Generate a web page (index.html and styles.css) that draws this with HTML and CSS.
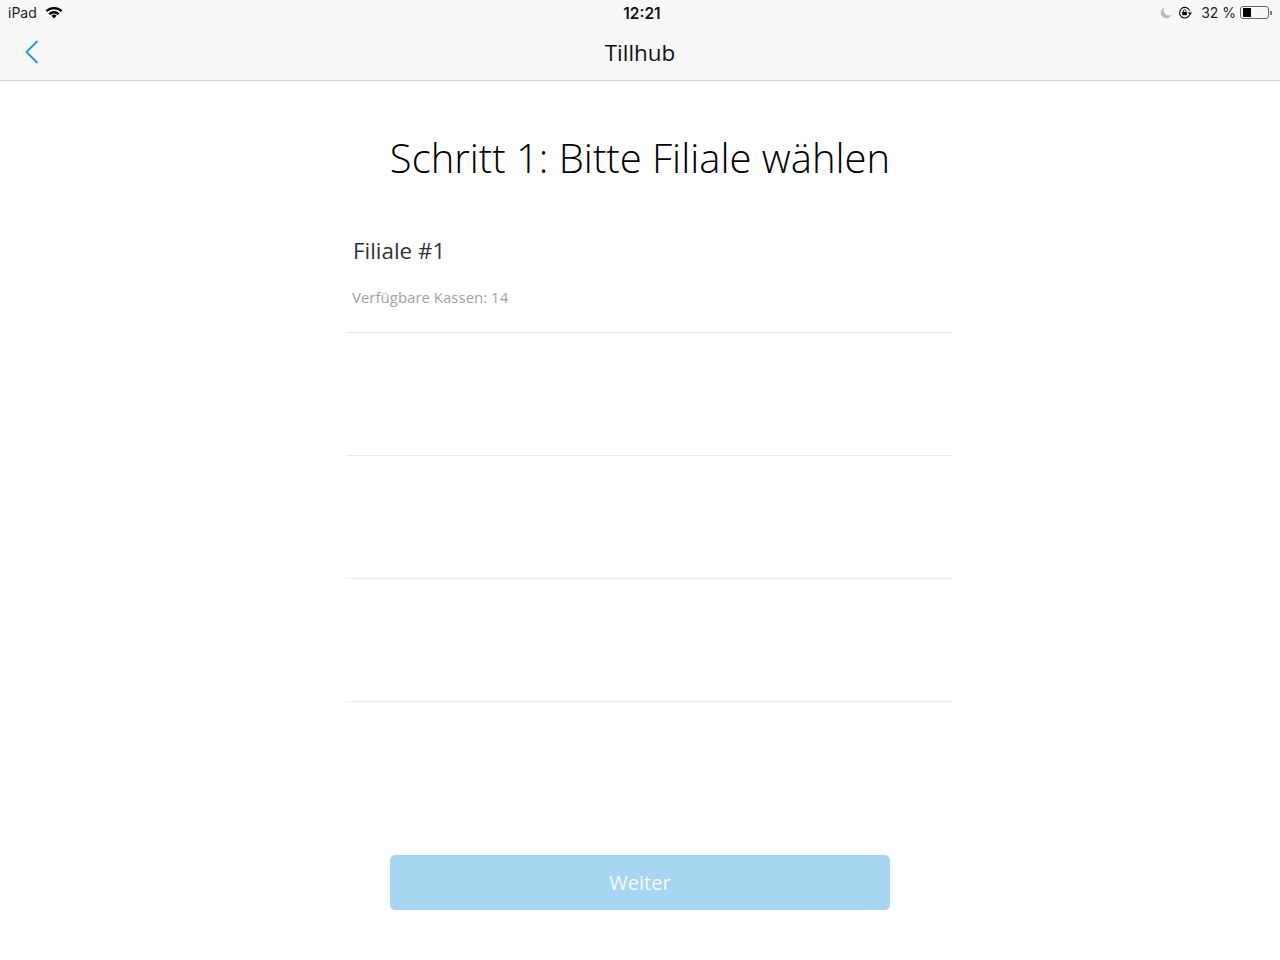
FILE: index.html
```html
<!DOCTYPE html>
<html lang="de">
<head>
    <meta charset="UTF-8">
    <meta name="viewport" content="width=device-width, initial-scale=1.0">
    <title>Tillhub</title>
    <link rel="stylesheet" href="styles.css">
</head>
<body>
    <header class="top">
        <div class="status">
            <div class="status-left">
                <span>iPad</span>
                <svg class="wifi" width="18" height="13" viewBox="0 0 18 13">
                    <path d="M9 12.6 6.4 9.8a3.8 3.8 0 0 1 5.2 0z" fill="#000"/>
                    <path d="M.6 4.300a12.200 12.200 0 0 1 16.800 0l-1.500 1.700a9.800 9.800 0 0 0-13.800 0z" fill="#000"/>
                    <path d="M3.500 7.300a8 8 0 0 1 11 0l-1.600 1.700a5.700 5.700 0 0 0-7.800 0z" fill="#000"/>
                </svg>
            </div>
            <div class="status-time">12:21</div>
            <div class="status-right">
                <svg width="12" height="12" viewBox="0 0 12 12">
                    <path d="M4.400.6a5.500 5.500 0 1 0 7 7.200A5.200 5.200 0 0 1 4.400.6z" fill="#b8b8b8"/>
                </svg>
                <svg class="lock" width="15" height="13" viewBox="0 0 15 13">
                    <path d="M11.800 8.600A5.300 5.300 0 1 1 11.700 4.600" fill="none" stroke="#000" stroke-width="1.100"/>
                    <path d="M9.800 6.500h4.400l-2.200 2.600z" fill="#000"/>
                    <rect x="4.300" y="6" width="4.600" height="3.200" fill="#000"/>
                    <path d="M5.300 6V5a1.300 1.300 0 0 1 2.600 0v1" fill="none" stroke="#000" stroke-width="0.800"/>
                </svg>
                <span class="percent">32 %</span>
                <div class="battery"><div class="battery-level"></div></div>
                <div class="battery-tip"></div>
            </div>
        </div>
        <nav class="navbar">
            <svg class="back" width="14" height="24" viewBox="0 0 14 24">
                <path d="M12.500 1 1.500 12l11 11" fill="none" stroke="#1b9ad6" stroke-width="1.800"/>
            </svg>
            <div class="nav-title">Tillhub</div>
        </nav>
    </header>

    <main class="content">
        <h1>Schritt 1: Bitte Filiale wählen</h1>
        <div class="branch-list">
            <div class="branch">
                <div class="branch-name">Filiale #1</div>
                <div class="branch-info">Verfügbare Kassen: 14</div>
            </div>
            <div class="branch"></div>
            <div class="branch"></div>
            <div class="branch"></div>
        </div>
        <button class="next">Weiter</button>
    </main>
</body>
</html>
```

FILE: styles.css
```css
body {
    margin: 0;
    height: 960px;
    font-family: 'Open Sans', sans-serif;
    background: white;
    color: #222;
    overflow: hidden;
}
.top {
    height: 80px;
    background-color: #f8f8f8;
    border-bottom: 1px solid #cfcfcf;
}
.status {
    height: 25px;
    padding: 0 8px;
    display: grid;
    grid-template-columns: 1fr auto 1fr;
    align-items: center;
    font-family: 'Inter', sans-serif;
    font-size: 14px;
    color: #222;
}
.status-left {
    display: flex;
    align-items: center;
    gap: 8px;
}
.status-time {
    font-size: 15.500px;
    font-weight: 600;
    color: #111;
    padding: 1px 0 0 4px;
}
.status-right {
    display: flex;
    align-items: center;
    justify-content: flex-end;
}
.lock {
    margin-left: 6px;
}
.percent {
    margin-left: 8px;
    margin-right: 4px;
}
.battery {
    box-sizing: border-box;
    width: 29px;
    height: 13px;
    border: 1px solid #666;
    border-radius: 3px;
    padding: 1px 2px;
}
.battery-level {
    width: 8px;
    height: 100%;
    background-color: #000;
}
.battery-tip {
    width: 2px;
    height: 4px;
    margin-left: 1px;
    background-color: #777;
}
.navbar {
    box-sizing: border-box;
    height: 55px;
    padding-bottom: 1px;
    display: flex;
    align-items: center;
    justify-content: center;
    position: relative;
}
.back {
    position: absolute;
    left: 25px;
    top: 15px;
}
.nav-title {
    font-size: 22.400px;
    color: #111;
}
.content {
    display: flex;
    flex-direction: column;
    align-items: center;
}
h1 {
    margin: 50px 0 0 0;
    font-size: 40px;
    line-height: 54px;
    font-weight: 300;
    color: #000;
}
.branch-list {
    width: 606px;
    margin-top: 28px;
    margin-left: 18px;
}
.branch {
    box-sizing: border-box;
    height: 123px;
    padding: 23px 6px 0 6px;
    border-bottom: 1px solid #ececec;
}
.branch:first-child {
    height: 120px;
}
.branch-name {
    margin-left: 1px;
    font-size: 22.400px;
    line-height: 30px;
    color: #333;
}
.branch-info {
    margin-top: 21px;
    font-size: 15px;
    line-height: 20px;
    color: #a3a3a3;
}
.next {
    width: 500px;
    height: 55px;
    margin-top: 153px;
    border: none;
    border-radius: 5px;
    background-color: #a8d6f2;
    color: #f2fafe;
    font-family: 'Open Sans', sans-serif;
    font-size: 20px;
}
```
